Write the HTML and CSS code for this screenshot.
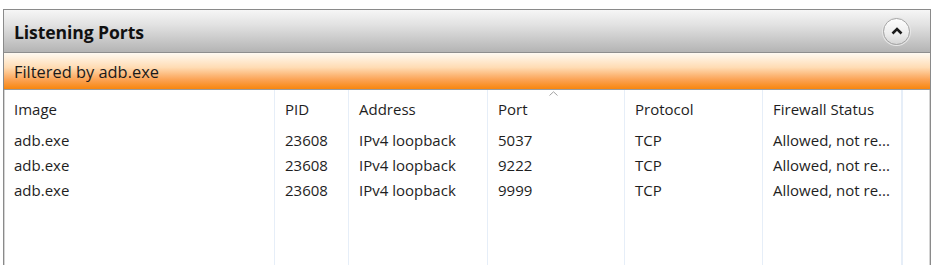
FILE: index.html
```html
<!DOCTYPE html>
<html>
<head>
<meta charset="utf-8">
<link rel="stylesheet" href="styles.css">
</head>
<body>
<div class="panel">
  <div class="header">
    <span class="title">Listening Ports</span>
    <button class="collapse" aria-label="Collapse">
      <svg width="12" height="8" viewBox="0 0 12 8"><path d="M1.5 6.5 L6 2 L10.5 6.5" fill="none" stroke="#1a1a1a" stroke-width="2.6" stroke-linejoin="miter"/></svg>
    </button>
  </div>
  <div class="filter">Filtered by adb.exe</div>
  <div class="table">
    <div class="col c1">
      <div class="cell head">Image</div>
      <div class="cell">adb.exe</div>
      <div class="cell">adb.exe</div>
      <div class="cell">adb.exe</div>
    </div>
    <div class="col c2">
      <div class="cell head">PID</div>
      <div class="cell">23608</div>
      <div class="cell">23608</div>
      <div class="cell">23608</div>
    </div>
    <div class="col c3">
      <div class="cell head">Address</div>
      <div class="cell">IPv4 loopback</div>
      <div class="cell">IPv4 loopback</div>
      <div class="cell">IPv4 loopback</div>
    </div>
    <div class="col c4 sorted">
      <svg class="sort" width="9" height="5" viewBox="0 0 9 5"><path d="M0.5 4.5 L4.5 0.8 L8.5 4.5" fill="none" stroke="#a0a0a0" stroke-width="1"/></svg>
      <div class="cell head">Port</div>
      <div class="cell">5037</div>
      <div class="cell">9222</div>
      <div class="cell">9999</div>
    </div>
    <div class="col c5">
      <div class="cell head">Protocol</div>
      <div class="cell">TCP</div>
      <div class="cell">TCP</div>
      <div class="cell">TCP</div>
    </div>
    <div class="col c6">
      <div class="cell head">Firewall Status</div>
      <div class="cell">Allowed, not re...</div>
      <div class="cell">Allowed, not re...</div>
      <div class="cell">Allowed, not re...</div>
    </div>
    <div class="col c7"></div>
  </div>
</div>
</body>
</html>
```

FILE: styles.css
```css
html, body {
  margin: 0;
  padding: 0;
  background: #ffffff;
}
body {
  font-family: "Open Sans", "Noto Sans", sans-serif;
  color: #1e1e1e;
}
.panel {
  margin: 9px 0 0 3px;
  width: 926px;
  height: 256px;
  border: 1px solid #8a8a8a;
  border-bottom: none;
  box-shadow: inset 1px 0 0 #d4d4d4, inset -1px 0 0 #d4d4d4;
  display: flex;
  flex-direction: column;
  overflow: hidden;
}
.header {
  height: 42px;
  border-bottom: 1px solid #8e8e8e;
  background: linear-gradient(to bottom, #f6f6f6 0%, #e2e2e2 35%, #b4b4b4 100%);
  display: flex;
  align-items: center;
  justify-content: space-between;
  padding: 0 20px 0 10px;
  flex: none;
}
.title {
  font-weight: 700;
  font-size: 17.6px;
  color: #111;
  letter-spacing: -0.1px;
  margin-top: 2px;
}
.collapse {
  width: 27px;
  height: 27px;
  border-radius: 50%;
  border: 1px solid #a5a5a5;
  background: linear-gradient(to bottom, #fdfdfd 0%, #ececec 60%, #d6d6d6 100%);
  box-shadow: 0 0 0 1px #e8e8e8;
  padding: 0;
  display: flex;
  align-items: center;
  justify-content: center;
}
.collapse svg { margin-top: -1px; }
.filter {
  height: 36px;
  border-bottom: 1px solid #9a9a9a;
  background: linear-gradient(to bottom, #fffaf2 0%, #ffdcb4 40%, #fba355 74%, #f7860e 100%);
  display: flex;
  align-items: center;
  padding: 0 10px;
  font-size: 16.4px;
  color: #1a1a1a;
  flex: none;
}
.table {
  flex: 1;
  display: flex;
}
.col {
  border-right: 1px solid #e6eef8;
  padding-left: 10px;
  position: relative;
  flex: none;
}
.c1 { width: 260px; }
.c2 { width: 63px; }
.c3 { width: 128px; }
.c4 { width: 126px; }
.c5 { width: 127px; }
.c6 { width: 128px; }
.c7 { width: 0; padding: 0; }
.cell {
  height: 25px;
  line-height: 25px;
  font-size: 15px;
  white-space: nowrap;
}
.cell.head {
  height: 38px;
  line-height: 22px;
  padding-top: 8px;
  box-sizing: border-box;
}
.sort {
  position: absolute;
  left: 61px;
  top: 1px;
}
```
